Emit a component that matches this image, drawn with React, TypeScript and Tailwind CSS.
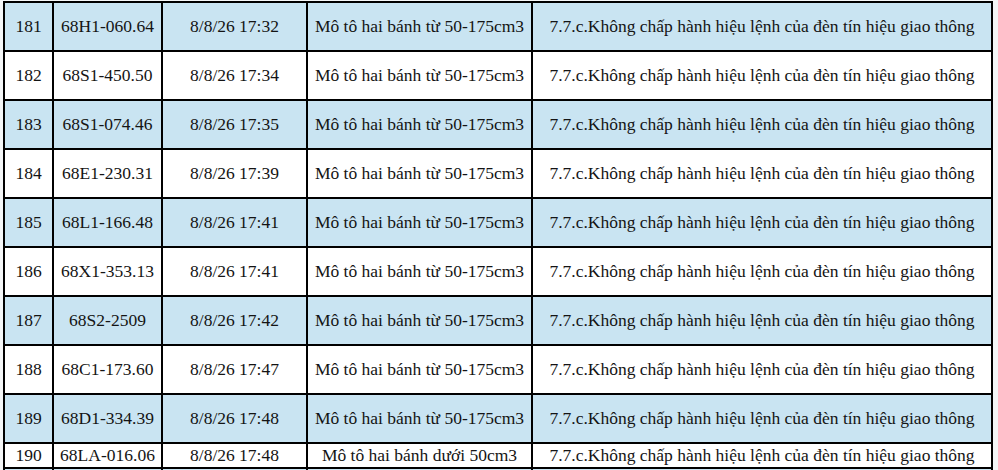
import React from 'react';

// Rows of the violation list, alternating blue / white backgrounds
interface ViolationRow {
  stt: number;
  plate: string;
  time: string;
  vehicle: string;
  violation: string;
}

const VIOLATION = '7.7.c.Không chấp hành hiệu lệnh của đèn tín hiệu giao thông';
const BIKE = 'Mô tô hai bánh từ 50-175cm3';

const rows: ViolationRow[] = [
  { stt: 181, plate: '68H1-060.64', time: '8/8/26 17:32', vehicle: BIKE, violation: VIOLATION },
  { stt: 182, plate: '68S1-450.50', time: '8/8/26 17:34', vehicle: BIKE, violation: VIOLATION },
  { stt: 183, plate: '68S1-074.46', time: '8/8/26 17:35', vehicle: BIKE, violation: VIOLATION },
  { stt: 184, plate: '68E1-230.31', time: '8/8/26 17:39', vehicle: BIKE, violation: VIOLATION },
  { stt: 185, plate: '68L1-166.48', time: '8/8/26 17:41', vehicle: BIKE, violation: VIOLATION },
  { stt: 186, plate: '68X1-353.13', time: '8/8/26 17:41', vehicle: BIKE, violation: VIOLATION },
  { stt: 187, plate: '68S2-2509', time: '8/8/26 17:42', vehicle: BIKE, violation: VIOLATION },
  { stt: 188, plate: '68C1-173.60', time: '8/8/26 17:47', vehicle: BIKE, violation: VIOLATION },
  { stt: 189, plate: '68D1-334.39', time: '8/8/26 17:48', vehicle: BIKE, violation: VIOLATION },
];

const App: React.FC = () => {
  const cell = 'border-2 border-black text-center align-middle p-0 whitespace-nowrap';

  return (
    <div
      className="w-[998px] h-[470px] overflow-hidden bg-[#f4f6f7] pl-[3px] pt-[1px] text-[17.5px] text-[#141414]"
      style={{ fontFamily: '"Liberation Serif", "Times New Roman", serif' }}
    >
      <table className="table-fixed border-collapse w-[990px] bg-white">
        <colgroup>
          <col className="w-[49px]" />
          <col className="w-[109px]" />
          <col className="w-[145px]" />
          <col className="w-[225px]" />
          <col className="w-[460px]" />
        </colgroup>
        <tbody>
          {rows.map((r, i) => (
            <tr key={r.stt} className={i % 2 === 0 ? 'bg-[#c9e4f2]' : 'bg-white'}>
              <td className={`${cell} h-[49px]`}>{r.stt}</td>
              <td className={cell}>{r.plate}</td>
              <td className={cell}>{r.time}</td>
              <td className={cell}>{r.vehicle}</td>
              <td className={cell}>{r.violation}</td>
            </tr>
          ))}
          <tr className="bg-white">
            <td className={`${cell} h-[25px] leading-[21px]`}>190</td>
            <td className={`${cell} leading-[21px]`}>68LA-016.06</td>
            <td className={`${cell} leading-[21px]`}>8/8/26 17:48</td>
            <td className={`${cell} leading-[21px]`}>Mô tô hai bánh dưới 50cm3</td>
            <td className={`${cell} leading-[21px]`}>{VIOLATION}</td>
          </tr>
          <tr className="bg-[#c9e4f2]">
            <td className={`${cell} h-[30px]`}></td>
            <td className={cell}></td>
            <td className={cell}></td>
            <td className={cell}></td>
            <td className={cell}></td>
          </tr>
        </tbody>
      </table>
    </div>
  );
};

export default App;
